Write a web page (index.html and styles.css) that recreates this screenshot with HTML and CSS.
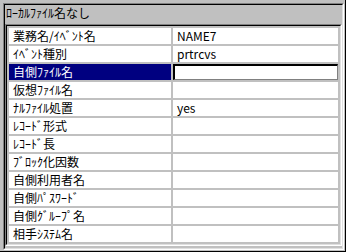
FILE: index.html
```html
<!DOCTYPE html>
<html lang="ja">
<head>
    <meta charset="UTF-8">
    <title>ﾌｧｲﾙ情報</title>
    <link rel="stylesheet" href="styles.css">
</head>
<body>
    <div class="window">
        <div class="frame">
            <div class="frame-inner">
                <div class="title">ﾛｰｶﾙﾌｧｲﾙ名なし</div>
                <div class="grid-wrap">
                    <div class="grid">
                        <div class="cell">業務名/ｲﾍﾞﾝﾄ名</div><div class="cell">NAME7</div>
                        <div class="cell">ｲﾍﾞﾝﾄ種別</div><div class="cell">prtrcvs</div>
                        <div class="cell selected">自側ﾌｧｲﾙ名</div><div class="cell edit"><input type="text" class="edit-box"></div>
                        <div class="cell">仮想ﾌｧｲﾙ名</div><div class="cell"></div>
                        <div class="cell">ﾅﾙﾌｧｲﾙ処置</div><div class="cell">yes</div>
                        <div class="cell">ﾚｺｰﾄﾞ形式</div><div class="cell"></div>
                        <div class="cell">ﾚｺｰﾄﾞ長</div><div class="cell"></div>
                        <div class="cell">ﾌﾞﾛｯｸ化因数</div><div class="cell"></div>
                        <div class="cell">自側利用者名</div><div class="cell"></div>
                        <div class="cell">自側ﾊﾟｽﾜｰﾄﾞ</div><div class="cell"></div>
                        <div class="cell">自側ｸﾞﾙｰﾌﾟ名</div><div class="cell"></div>
                        <div class="cell">相手ｼｽﾃﾑ名</div><div class="cell"></div>
                    </div>
                </div>
            </div>
        </div>
    </div>
</body>
</html>
```

FILE: styles.css
```css
body {
    margin: 0;
    background: #c0c0c0;
    font-family: "MS UI Gothic", "Noto Sans CJK JP", sans-serif;
    font-size: 12px;
}
.window {
    width: 346px;
    height: 252px;
    box-sizing: border-box;
    padding: 3px 1px 1px 3px;
    background: #c0c0c0;
    border-right: 1px solid #000;
    border-bottom: 1px solid #000;
}
.frame {
    height: 100%;
    box-sizing: border-box;
    border-top: 1px solid #808080;
    border-left: 1px solid #808080;
    border-right: 1px solid #fff;
    border-bottom: 1px solid #fff;
}
.frame-inner {
    height: 100%;
    box-sizing: border-box;
    border-top: 1px solid #000;
    border-left: 1px solid #000;
    border-right: 1px solid #dfdfdf;
    border-bottom: 1px solid #dfdfdf;
}
.title {
    height: 16px;
    line-height: 16px;
    padding-left: 1px;
    color: #000;
}
.grid-wrap {
    margin-top: 3px;
    border-top: 1px solid #808080;
    border-left: 1px solid #808080;
    border-right: 1px solid #fff;
    border-bottom: 1px solid #fff;
}
.grid {
    display: grid;
    grid-template-columns: 162px 1fr;
    grid-auto-rows: 16px;
    gap: 2px;
    padding: 2px;
    background: #c0c0c0;
    border-top: 1px solid #000;
    border-left: 1px solid #000;
    border-right: 1px solid #dfdfdf;
    border-bottom: 1px solid #dfdfdf;
}
.cell {
    background: #fff;
    color: #000;
    line-height: 16px;
    padding-left: 4px;
    white-space: nowrap;
    overflow: hidden;
}
.selected {
    background: #000080;
    color: #fff;
}
.edit {
    padding: 0;
}
.edit-box {
    display: block;
    width: 100%;
    height: 16px;
    box-sizing: border-box;
    margin: 0;
    padding: 0;
    border-top: 2px solid #000;
    border-left: 2px solid #000;
    border-right: 1px solid #808080;
    border-bottom: 1px solid #808080;
    background: #fff;
    outline: none;
}
```
